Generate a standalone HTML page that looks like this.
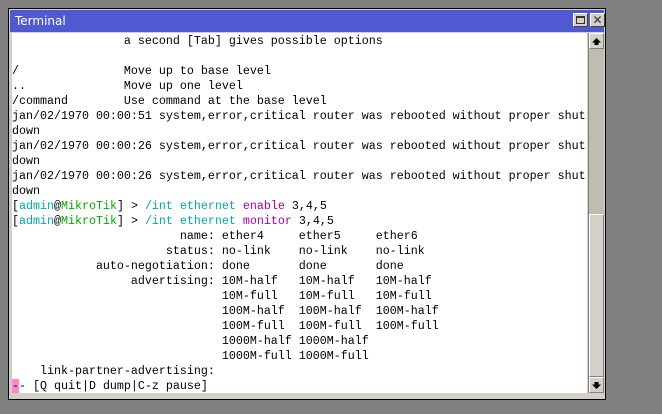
<!DOCTYPE html>
<html><head><meta charset="utf-8"><style>
html,body{margin:0;padding:0;}
body{width:662px;height:414px;background:#808080;position:relative;overflow:hidden;}
#win{position:absolute;left:8px;top:8px;width:598px;height:392px;background:#d4d0c8;border:1px solid #000;box-sizing:border-box;}
#title{position:absolute;left:1px;top:1px;width:594px;height:22px;background:#5059cf;color:#fff;font:12px "DejaVu Sans","Liberation Sans",sans-serif;line-height:22px;padding-left:5px;box-sizing:border-box;}
.btn{position:absolute;top:3px;width:15px;height:14px;background:#d4d0c8;border:1px solid;border-color:#fff #404040 #404040 #fff;box-sizing:border-box;}
#content{position:absolute;left:3px;top:24px;width:575px;height:360px;background:#fff;overflow:hidden;}
pre{margin:0;position:absolute;left:0px;top:1px;font-family:"Liberation Mono",monospace;font-size:11.67px;line-height:15px;color:#000;}
.t{color:#0aa}.g{color:#0a0}.m{color:#a0a}.c{background:#f8c}
#sb{position:absolute;left:579px;top:24px;width:16px;height:360px;background:#c0bcb4;border-left:1px solid #808080;box-sizing:border-box;}
.sbb{position:absolute;left:0;width:15px;height:16px;background:#d4d0c8;border:1px solid;border-color:#fff #808080 #808080 #fff;box-sizing:border-box;}
</style></head><body>
<div id="win">
<div id="title">Terminal
<div class="btn" style="left:563px"><div style="position:absolute;left:2px;top:2px;width:9px;height:8px;border:1px solid #333;border-top-width:2px;box-sizing:border-box"></div></div>
<div class="btn" style="left:580px;color:#333;font:bold 12px 'DejaVu Sans',sans-serif;line-height:12px;text-align:center">✕</div>
</div>
<div id="content"><pre>                a second [Tab] gives possible options

/               Move up to base level
..              Move up one level
/command        Use command at the base level
jan/02/1970 00:00:51 system,error,critical router was rebooted without proper shut
down
jan/02/1970 00:00:26 system,error,critical router was rebooted without proper shut
down
jan/02/1970 00:00:26 system,error,critical router was rebooted without proper shut
down
[<span class="t">admin</span>@<span class="g">MikroTik</span>] &gt; <span class="t">/int ethernet</span> <span class="m">enable</span> 3,4,5
[<span class="t">admin</span>@<span class="g">MikroTik</span>] &gt; <span class="t">/int ethernet</span> <span class="m">monitor</span> 3,4,5
                        name: ether4     ether5     ether6
                      status: no-link    no-link    no-link
            auto-negotiation: done       done       done
                 advertising: 10M-half   10M-half   10M-half
                              10M-full   10M-full   10M-full
                              100M-half  100M-half  100M-half
                              100M-full  100M-full  100M-full
                              1000M-half 1000M-half
                              1000M-full 1000M-full
    link-partner-advertising:
<span class="c">-</span>- [Q quit|D dump|C-z pause]</pre></div>
<div id="sb">
<div class="sbb" style="top:0"><svg width="13" height="14" style="position:absolute;left:0;top:0"><path d="M6.5 4 L11 8.5 L8.5 8.5 L8.5 11 L4.5 11 L4.5 8.5 L2 8.5Z" fill="#000"/></svg></div>
<div style="position:absolute;left:0;top:181px;width:15px;height:163px;background:#d4d0c8;border:1px solid;border-color:#fff #808080 #808080 #fff;box-sizing:border-box"></div>
<div class="sbb" style="top:344px"><svg width="13" height="14" style="position:absolute;left:0;top:0"><path d="M6.5 11 L11 6.5 L8.5 6.5 L8.5 4 L4.5 4 L4.5 6.5 L2 6.5Z" fill="#000"/></svg></div>
</div>
</div>
</body></html>
